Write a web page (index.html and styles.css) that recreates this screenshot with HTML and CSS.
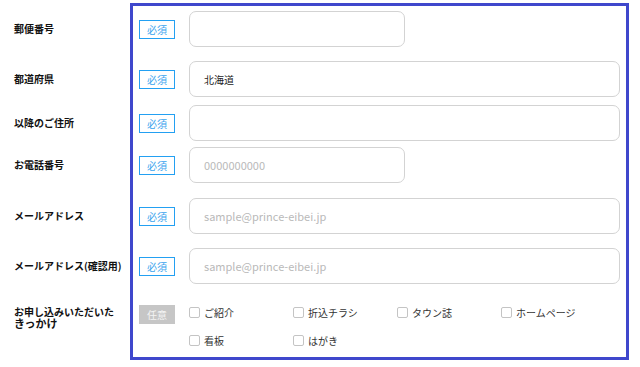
FILE: index.html
```html
<!DOCTYPE html>
<html lang="ja">
<head>
<meta charset="utf-8">
<link rel="stylesheet" href="styles.css">
</head>
<body>
<div class="page">
  <div class="form">
    <div class="row r1">
      <div class="label">郵便番号</div>
      <span class="badge req">必須</span>
      <div class="input short"></div>
    </div>
    <div class="row r2">
      <div class="label">都道府県</div>
      <span class="badge req">必須</span>
      <div class="input long"><span class="value">北海道</span></div>
    </div>
    <div class="row r3">
      <div class="label">以降のご住所</div>
      <span class="badge req">必須</span>
      <div class="input long"></div>
    </div>
    <div class="row r4">
      <div class="label">お電話番号</div>
      <span class="badge req">必須</span>
      <div class="input short"><span class="ph">0000000000</span></div>
    </div>
    <div class="row r5">
      <div class="label">メールアドレス</div>
      <span class="badge req">必須</span>
      <div class="input long"><span class="ph">sample@prince-eibei.jp</span></div>
    </div>
    <div class="row r6">
      <div class="label">メールアドレス(確認用)</div>
      <span class="badge req">必須</span>
      <div class="input long"><span class="ph">sample@prince-eibei.jp</span></div>
    </div>
    <div class="row r7">
      <div class="label multi"><span class="l1">お申し込みいただいた</span><span class="l2">きっかけ</span></div>
      <span class="badge opt">任意</span>
      <div class="checks">
        <label class="check"><span class="box"></span>ご紹介</label>
        <label class="check"><span class="box"></span>折込チラシ</label>
        <label class="check"><span class="box"></span>タウン誌</label>
        <label class="check"><span class="box"></span>ホームページ</label>
        <label class="check"><span class="box"></span>看板</label>
        <label class="check"><span class="box"></span>はがき</label>
      </div>
    </div>
  </div>
  <div class="highlight"></div>
</div>
</body>
</html>
```
FILE: styles.css
```css
* { box-sizing: border-box; }
html, body { margin: 0; padding: 0; background: #fff; }
body {
  font-family: "Noto Sans CJK JP", "Noto Sans", sans-serif;
  color: #222;
  width: 640px;
  height: 367px;
  overflow: hidden;
}
.page { position: relative; width: 640px; height: 367px; }
.form { display: flex; flex-direction: column; padding-top: 11px; }
.row { display: flex; align-items: center; height: 36px; }
.r2 { margin-top: 14px; }
.r3 { margin-top: 8px; }
.r4 { margin-top: 6px; }
.r5 { margin-top: 15px; }
.r6 { margin-top: 14px; }
.r7 { margin-top: 21px; align-items: flex-start; height: auto; }
.label {
  width: 139px;
  padding-left: 14px;
  font-size: 10px;
  font-weight: bold;
  line-height: 12px;
  color: #111;
  white-space: nowrap;
}
.label.multi { display: flex; flex-direction: column; margin-top: 1px; }
.label .l1 { line-height: 11px; }
.label .l2 { font-size: 11px; line-height: 12px; }
.badge {
  width: 36px;
  height: 19px;
  display: flex;
  align-items: center;
  justify-content: center;
  font-size: 10px;
  flex: none;
  margin-right: 14px;
}
.badge.req { border: 1px solid #23a0f2; color: #3aa4ee; background: #fff; }
.badge.opt { background: #c6c6c6; color: #f4f4f4; }
.input {
  height: 36px;
  border: 1px solid #d3d3d3;
  border-radius: 7px;
  display: flex;
  align-items: center;
  padding-left: 14px;
  font-size: 10px;
}
.input.short { width: 216px; }
.input.long { width: 431px; }
.value { color: #222; }
.ph { color: #b9b9b9; font-size: 11px; }
.checks {
  display: grid;
  grid-template-columns: repeat(4, 104px);
  grid-auto-rows: 28px;
  margin-top: -7px;
}
.check {
  display: flex;
  align-items: center;
  font-size: 10px;
  color: #333;
  height: 28px;
}
.box {
  width: 11px;
  height: 11px;
  border: 1px solid #c4c4c4;
  border-radius: 2px;
  margin-right: 4px;
  background: #fff;
}
.highlight {
  position: absolute;
  left: 130px;
  top: 3px;
  width: 499px;
  height: 357px;
  border: 3px solid #3f47cc;
  pointer-events: none;
}
```
